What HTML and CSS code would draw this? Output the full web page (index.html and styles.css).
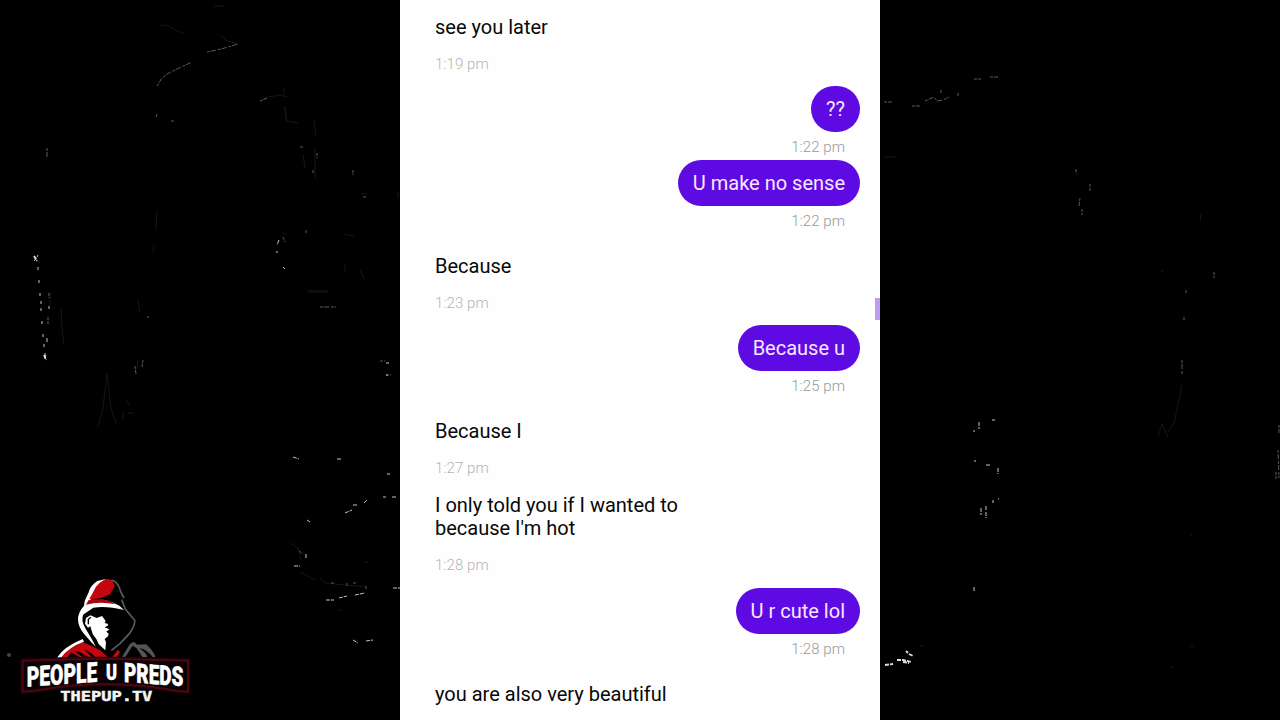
FILE: index.html
```html
<!DOCTYPE html>
<html lang="en">
<head>
<meta charset="utf-8">
<title>Chat</title>
<link rel="stylesheet" href="styles.css">
</head>
<body>
<div class="stage">
  <svg class="texture" viewBox="0 0 1280 720" aria-hidden="true">
    <g class="faint">
      <path d="M160 25l9 1 8 5 8 3M214 6h10M220 35l7 6 11 3M284 95v-8M285 107l2 15M303 154l2 14M156 230l1-20M154 245l-1 8M50 292v14M61 308l1 20 2 16M107 373l-4 35-5 18M107 373l4 35 5 15M137 370l1-11M126 399l3 6M122 420l2-9M128 413h6M147 317h3M310 292h18M345 265v7M360 270l4 9M307 291h20M290 543l8 5 3 12M300 572l15 8M320 578l5 5 42 4M338 610h3M363 562h6M884 157h12M1076 170l1 6M1190 535h2M1182 385l-4 20-4 18-6 9M1158 437l4-13 6 13M1194 646h-4M1170 667h3M920 646h5M1200 222l1-8M1161 271h3"/>
      <path d="M260 101l8-4 12-2 7 2M285 107l1 14 12 2M314 120l2 17M315 148v30M352 172l2 4M361 194h6M398 192v6M282 232l4 3M344 234l10 2M138 300l2 13"/>
    </g>
    <g class="mid">
      <path d="M157 86l5-8 5-4 10-5 15-7M207 52l14-3 17-5M47 148v10M156 117l1-3M171 121h3M260 101l7-3M300 147h3M313 170v4M317 153v5M353 170v5M363 197h4M306 230v3M49 293v5M48 317v7M143 360l-1 7M135 366l1 8M147 317h2M320 307h16M380 361h5M386 375h5M283 237l2 5M884 102h8M912 106h8M925 101l9-4 3 4 6-1 6-3M941 90v4M958 93v3M974 79h7M990 77h8M1076 169v3M1090 184v7M1080 198l-1 8M1082 209v6M1186 290v3M1184 317v3M1182 360v14M1214 272v6M1279 425v8M1278 450l1 28M1276 472v7M299 551l4 3M331 583h3M347 583v4M353 583h3M366 586v3"/>
    </g>
    <g class="bright">
      <path d="M34 261l3-4 1-2M38 267v3M39 280v3M40 293v3M41 301v3M41 308v3M42 321v3M43 334v3M44 344v3M45 353v4M45 359l1-5M47 338v5M49 306v3M277 251v2M279 240l-2 5M283 267l2 2M386 363h3M386 375h2M293 457l6 2M337 459h4M307 520l3 2M345 513l7-3M353 505h4M364 503l3-3M383 497h3M392 497h4M387 474h3M306 554v5M294 566h6M326 600h8M339 598l8-2M355 595l10-2M353 640l5 3M366 641l7-1M393 588h7M979 422v7M974 430v2M992 420h3M974 461h2M986 465h4M998 468v6M981 508v7M986 506v5M993 500v3M998 499h1M986 512v6M974 587v4"/>
      <path class="heavy" d="M34 256l3 5M44 355l2 5M897 660h6l8 2M903 662l6 1M885 665l8-1M906 651l2 2M909 654l4 2"/>
    </g>
    <circle class="spot" cx="9" cy="655" r="2"/>
  </svg>

  <main class="chat">
    <div class="group">
      <article class="msg"><p class="bubble">see you later</p><time class="time">1:19 pm</time></article>
    </div>
    <div class="group sent">
      <article class="msg"><p class="bubble">??</p><time class="time">1:22 pm</time></article>
      <article class="msg"><p class="bubble">U make no sense</p><time class="time">1:22 pm</time></article>
    </div>
    <div class="group">
      <article class="msg"><p class="bubble">Because</p><time class="time">1:23 pm</time></article>
    </div>
    <div class="group sent">
      <article class="msg"><p class="bubble">Because u</p><time class="time">1:25 pm</time></article>
    </div>
    <div class="group">
      <article class="msg"><p class="bubble">Because I</p><time class="time">1:27 pm</time></article>
      <article class="msg"><p class="bubble">I only told you if I wanted to because I'm hot</p><time class="time">1:28 pm</time></article>
    </div>
    <div class="group sent">
      <article class="msg"><p class="bubble">U r cute lol</p><time class="time">1:28 pm</time></article>
    </div>
    <div class="group">
      <article class="msg"><p class="bubble">you are also very beautiful</p></article>
    </div>
    <span class="handle"></span>
  </main>

  <svg class="logo" viewBox="0 0 570 450" role="img" aria-label="People U Preds">
    <!-- hood -->
    <path fill="#fff" d="M287 42L262 48Q240 62 236 82L224 108L222 122Q204 142 204 162Q204 184 220 204L244 232L258 246L244 220L226 190Q212 166 220 148Q232 128 262 124Q304 118 342 135Q322 110 276 104L240 108L258 76Q270 54 287 42Z"/>
    <path fill="#c5070d" d="M292 42Q262 50 250 80L238 102L260 101Q274 100 282 95L300 88L314 64L307 45Z"/>
    <path fill="#a80810" d="M228 119L236 105Q270 100 300 108L318 118Q270 108 228 119Z"/>
    <path fill="#fff" d="M222 124Q280 104 342 135Q290 122 250 128L218 150Z"/>
    <path fill="none" stroke="#5b5b5d" stroke-width="5" d="M307 45Q326 54 332 80L342 99M335 104L346 132L374 166Q376 180 358 206L330 236L304 256"/>
    <!-- face -->
    <path fill="#fff" d="M241 151L228 159L225 176L234 188L241 184L248 207L259 222L266 237L286 256L288 232L284 222L294 214L296 206L289 200L298 193L284 187L295 181L293 176L284 174L287 168L276 153L260 159Z"/>
    <path fill="none" stroke="#000" stroke-width="4" d="M243 157L235 163L235 178"/>
    <!-- shoulders -->
    <path fill="#c5070d" d="M150 278L174 252L218 232L244 242L270 256L302 284Z"/>
    <path fill="#000" d="M172 278L184 262L212 278ZM192 258L207 260L240 279L222 279ZM222 252L246 266L258 279L246 277Z"/>
    <path fill="#c5070d" d="M302 282L324 254L330 262L318 282Z"/>
    <path fill="#fff" d="M141 278Q160 246 218 222L222 230Q176 246 154 277Z"/>
    <path fill="#555557" d="M336 276L360 236L372 230L381 239L408 238Q430 256 436 276L428 276Q414 256 388 248L408 266L412 276L397 276L380 250L368 242L346 276Z"/>
    <!-- plate -->
    <path class="glow" d="M38 287L240 282H330L534 287V380L490 376Q285 338 84 376L38 380Z"/>
    <path class="plate" d="M38 287L240 282H330L534 287V380L490 376Q285 338 84 376L38 380Z"/>
    <g class="name">
      <text transform="matrix(1 -.07 0 1 50 365)" font-size="83" textLength="212" lengthAdjust="spacingAndGlyphs">PEOPLE</text>
      <text x="288" y="345" font-size="68" textLength="33" lengthAdjust="spacingAndGlyphs">U</text>
      <text transform="matrix(1 .07 0 1 342 351)" font-size="81" textLength="178" lengthAdjust="spacingAndGlyphs">PREDS</text>
    </g>
    <text class="site" x="151" y="409" textLength="276" lengthAdjust="spacingAndGlyphs">THEPUP.TV</text>
  </svg>
</div>
</body>
</html>
```
FILE: styles.css
```css
* { box-sizing: border-box; }
body { margin: 0; background: #000; }
.stage {
  position: relative;
  width: 1280px;
  height: 720px;
  overflow: hidden;
  background: #000;
  display: flex;
  justify-content: center;
}
.texture { position: absolute; inset: 0; width: 1280px; height: 720px; }
.texture path { fill: none; stroke-width: 1; }
.faint { stroke: #161616; }
.mid { stroke: #5a5a5a; stroke-dasharray: 3 1 5 2; }
.bright { stroke: #c4c4c4; stroke-dasharray: 4 1; }
.texture .heavy { stroke: #ddd; stroke-width: 1.8; }
.spot { fill: #444; }

.chat {
  position: relative;
  width: 480px;
  height: 720px;
  padding: 3.6px 20px 0;
  background: #fefefe;
  font-family: Roboto, "Liberation Sans", sans-serif;
  display: flex;
  flex-direction: column;
  gap: 8.6px;
  overflow: hidden;
}
.group { display: flex; flex-direction: column; align-items: flex-start; flex: none; }
.msg { display: flex; flex-direction: column; align-items: flex-start; max-width: 285px; }
.bubble {
  margin: 0;
  padding: 12px 15px 10.4px;
  border-radius: 23px;
  font-size: 20px;
  line-height: 23.6px;
  color: #080808;
}
.time {
  height: 28px;
  padding: 0 15px;
  font-size: 15px;
  line-height: 29px;
  font-weight: 300;
  letter-spacing: .05px;
  color: #b4b4b4;
}
.sent, .sent .msg { align-items: flex-end; }
.sent .bubble { background: #5e0be3; color: #fbe6ff; }
.sent .time { color: #999; line-height: 30px; }
.handle { position: absolute; right: 0; top: 298px; width: 5px; height: 22px; background: #bd9df0; }

.logo { position: absolute; left: 10px; top: 565px; width: 190px; height: 150px; overflow: visible; }
.plate { fill: #080003; stroke: #4c0612; stroke-width: 6; stroke-linejoin: round; }
.glow { fill: none; stroke: #20020a; stroke-width: 13; stroke-linejoin: round; }
.name { fill: #fff; stroke: #fff; stroke-width: 1.5; font-family: Roboto, sans-serif; font-weight: 900; }
.site { fill: #f4f4f4; stroke: #f4f4f4; stroke-width: 1.5; font: 700 43px "DejaVu Sans Mono", monospace; }
```
